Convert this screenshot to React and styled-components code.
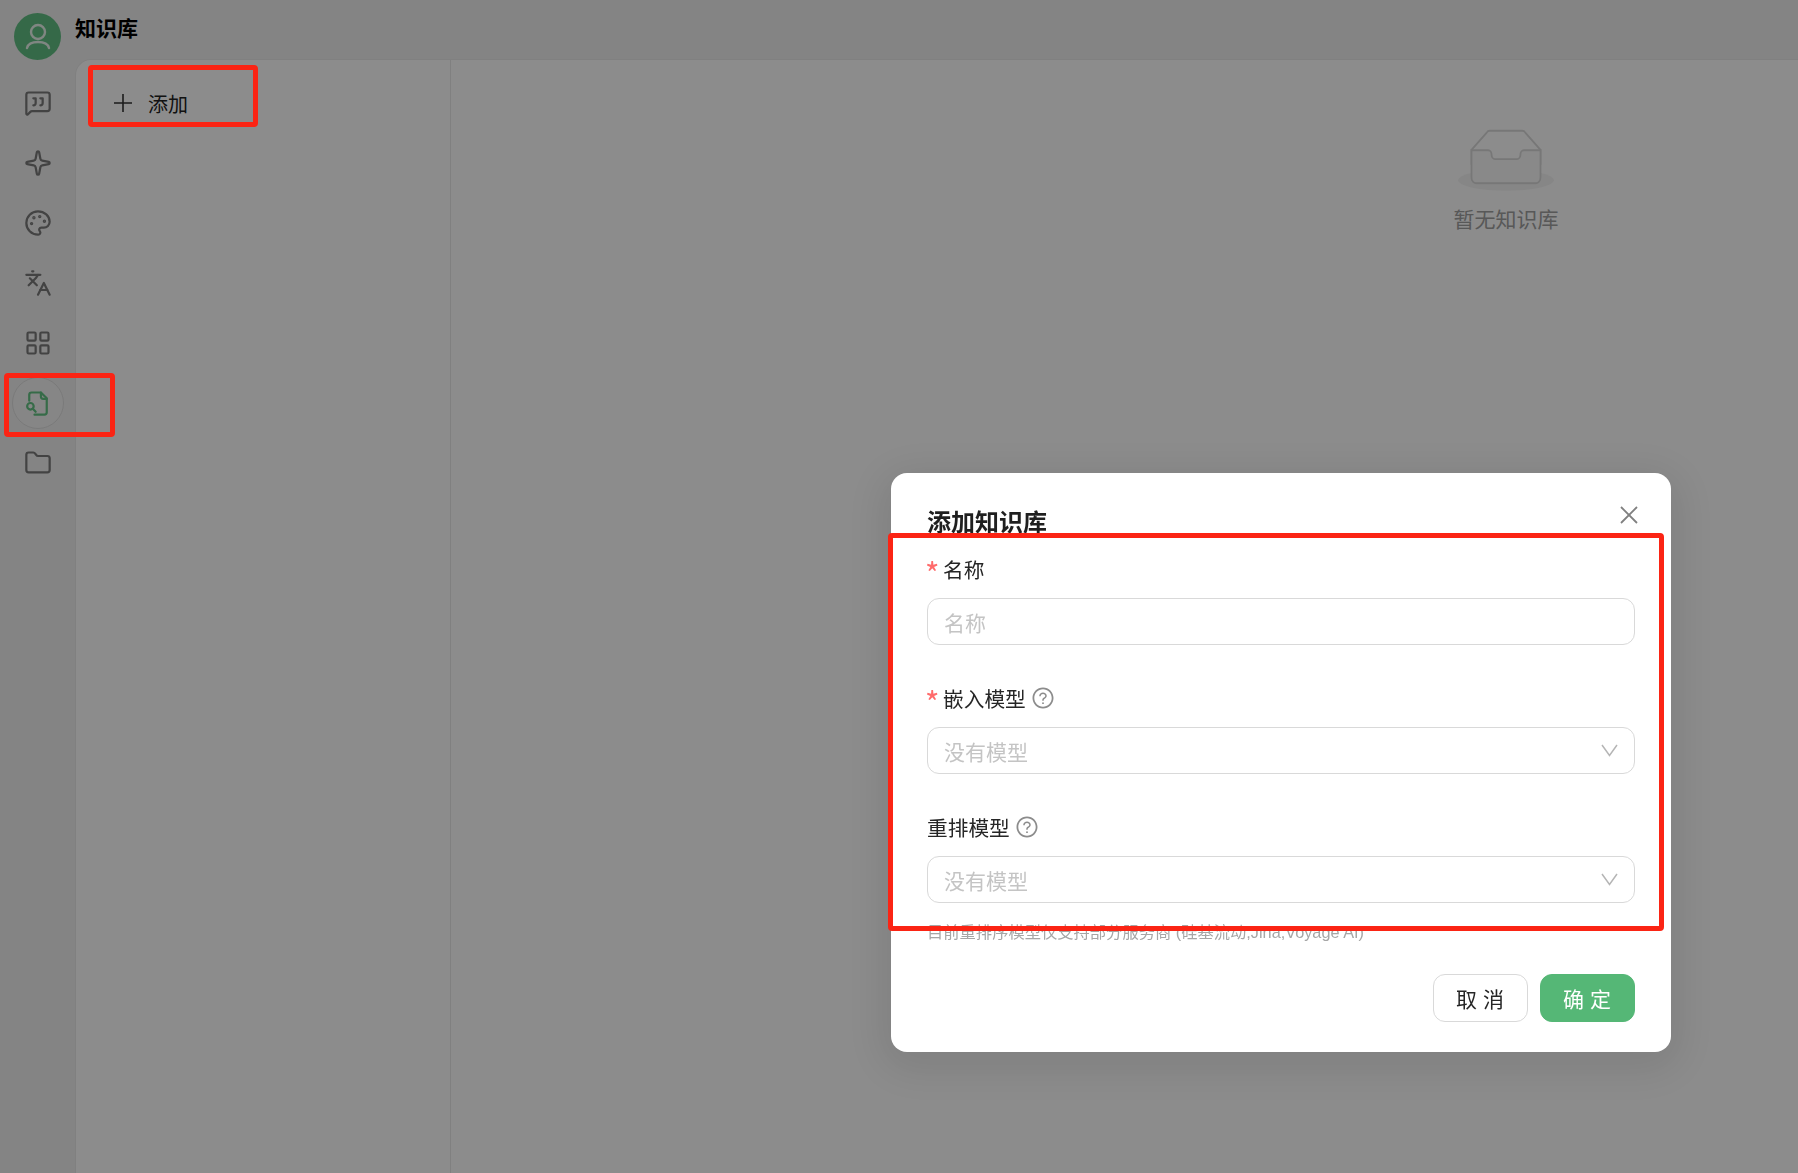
import React from 'react'
import styled, {createGlobalStyle} from 'styled-components'
import {MessageSquareQuote, Sparkle, Palette, Languages, LayoutGrid, Folder} from 'lucide-react'
import {AiOutlineQuestionCircle} from 'react-icons/ai'

const GlobalStyle = createGlobalStyle`
  html, body {
    margin: 0;
    padding: 0;
    height: 100%;
    overflow: hidden;
    font-family: "Liberation Sans", "Noto Sans CJK SC", sans-serif;
  }
  * { box-sizing: border-box; }
`

const Page = styled.div`
  display: flex;
  width: 1798px;
  height: 1173px;
  background: #f1f1f1;
  color: #000;
`

const Sidebar = styled.div`
  width: 75px;
  flex: none;
  display: flex;
  flex-direction: column;
  align-items: center;
  padding-top: 13px;
`

const Avatar = styled.div`
  width: 47px;
  height: 47px;
  border-radius: 50%;
  background: #62c084;
  display: flex;
  align-items: center;
  justify-content: center;
  margin-bottom: 17px;
`

const NavItem = styled.div`
  width: 52px;
  height: 52px;
  margin-bottom: 8px;
  border-radius: 50%;
  display: flex;
  align-items: center;
  justify-content: center;
  color: ${props => props.$active ? '#63c384' : '#7a7a7a'};
  background: ${props => props.$active ? '#f5f5f5' : 'transparent'};
  border: 1px solid ${props => props.$active ? '#dedede' : 'transparent'};
`

const Main = styled.div`
  flex: 1;
  display: flex;
  flex-direction: column;
`

const TopBar = styled.div`
  height: 59px;
  flex: none;
  padding-top: 16px;
  font-size: 21px;
  line-height: 26px;
  font-weight: 700;
`

const Panel = styled.div`
  flex: 1;
  display: flex;
  background: #fff;
  border-top: 1px solid #e9e9e9;
  border-left: 1px solid #e9e9e9;
  border-top-left-radius: 16px;
`

const ListColumn = styled.div`
  width: 375px;
  flex: none;
  border-right: 1px solid #e9e9e9;
  padding: 30px 0 0 37px;
`

const AddRow = styled.div`
  display: flex;
  align-items: center;
  gap: 15px;
  height: 26px;
  font-size: 20px;
  color: #222;
`

const Content = styled.div`
  flex: 1;
  display: flex;
  justify-content: flex-end;
  padding: 69px 192px 0 0;
`

const Empty = styled.div`
  width: 200px;
  display: flex;
  flex-direction: column;
  align-items: center;
  font-size: 21px;
  line-height: 32px;
  color: #a0a0a0;
`

const EmptyText = styled.div`
  margin-top: 13px;
`

const Overlay = styled.div`
  position: fixed;
  inset: 0;
  background: rgba(0, 0, 0, 0.45);
  padding: 473px 0 0 891px;
`

const Modal = styled.div`
  position: relative;
  width: 780px;
  height: 579px;
  background: #fff;
  border-radius: 16px;
  padding: 31px 36px 30px;
  box-shadow: 0 9px 42px 12px rgba(0, 0, 0, 0.09);
`

const Title = styled.div`
  height: 38px;
  margin-bottom: 12px;
  font-size: 24px;
  line-height: 38px;
  font-weight: 700;
  color: #1f1f1f;
`

const CloseButton = styled.div`
  position: absolute;
  top: 32px;
  right: 32px;
  display: flex;
  color: #808080;
`

const Field = styled.div`
  & + & { margin-top: 38px; }
`

const Label = styled.div`
  height: 30px;
  margin-bottom: 14px;
  display: flex;
  align-items: center;
  font-size: 20.7px;
  color: #262626;
  svg { margin-left: 5px; color: #8c8c8c; }
`

const Star = styled.span`
  width: 16px;
  flex: none;
  margin-left: -2px;
  margin-right: 2px;
  color: #ff6b6b;
  font-size: 31px;
  font-family: "Noto Sans CJK SC", sans-serif;
  line-height: 30px;
  padding-top: 8px;
`

const Input = styled.div`
  height: 47px;
  border: 1.5px solid #d9d9d9;
  border-radius: 12px;
  padding: 0 16px 0 16px;
  display: flex;
  align-items: center;
  justify-content: space-between;
  font-size: 21px;
  color: #c4c4c4;
`

const Help = styled.div`
  margin-top: 17px;
  height: 24px;
  font-size: 16.3px;
  line-height: 24px;
  color: #a6a6a6;
`

const Footer = styled.div`
  margin-top: 30px;
  display: flex;
  justify-content: flex-end;
  gap: 12px;
`

const Button = styled.div`
  width: 95px;
  height: 48px;
  border-radius: 12px;
  display: flex;
  align-items: center;
  justify-content: center;
  font-size: 21px;
  letter-spacing: 6px;
  padding-left: 5px;
  color: ${props => props.$primary ? '#fff' : '#262626'};
  background: ${props => props.$primary ? '#55b776' : '#fff'};
  border: 1.5px solid ${props => props.$primary ? '#55b776' : '#d9d9d9'};
`

const Mark = styled.div`
  position: fixed;
  left: ${props => props.$x}px;
  top: ${props => props.$y}px;
  width: ${props => props.$w}px;
  height: ${props => props.$h}px;
  border: 5px solid #fb2414;
  border-radius: 4px;
  pointer-events: none;
`

const UserGlyph = () => (
  <svg width="30" height="30" viewBox="0 0 30 30" fill="none" stroke="#e9f5ed" strokeWidth="2.4" strokeLinecap="round">
    <circle cx="15" cy="10" r="7" />
    <path d="M4 26c1-4 5-6 11-6s10 2 11 6" />
  </svg>
)

const DocSearchGlyph = ({size}) => (
  <svg width={size} height={size} viewBox="0 0 24 24" fill="none" stroke="currentColor" strokeWidth="1.9" strokeLinecap="round" strokeLinejoin="round">
    <path d="M4.5 10V5a2 2 0 0 1 2-2h8l5 5v12a2 2 0 0 1-2 2H9" />
    <path d="M14.5 3v3.5a2 2 0 0 0 2 2h3" />
    <circle cx="5.5" cy="14.8" r="2.8" />
    <path d="M7.6 17l2.4 2.5" />
  </svg>
)

const PlusGlyph = () => (
  <svg width="20" height="20" viewBox="0 0 20 20" stroke="#333" strokeWidth="1.6">
    <path d="M10 1v18M1 10h18" />
  </svg>
)

const CloseGlyph = () => (
  <svg width="20" height="20" viewBox="0 0 20 20" stroke="currentColor" strokeWidth="1.8">
    <path d="M2 2l16 16M18 2L2 18" />
  </svg>
)

const ChevronGlyph = () => (
  <svg width="17" height="13" viewBox="0 0 17 13" fill="none" stroke="#b5b5b5" strokeWidth="1.5">
    <path d="M1 1l7.5 10.5L16 1" />
  </svg>
)

const EmptyGlyph = () => (
  <svg width="96" height="62" viewBox="0 0 64 41">
    <g transform="translate(0 1)" fill="none" fillRule="evenodd">
      <ellipse cx="32" cy="33" rx="32" ry="7" fill="#f5f5f5" />
      <g fillRule="nonzero" stroke="#d9d9d9" strokeWidth="1.2">
        <path d="M55 12.76L44.854 1.258C44.367.474 43.656 0 42.907 0H21.093c-.749 0-1.46.474-1.947 1.257L9 12.761V22h46v-9.24z" />
        <path d="M41.613 15.931c0-1.605.994-2.93 2.227-2.931H55v18.137C55 33.26 53.68 35 52.05 35h-40.1C10.32 35 9 33.259 9 31.137V13h11.16c1.233 0 2.227 1.323 2.227 2.928v.022c0 1.605 1.005 2.901 2.237 2.901h14.752c1.232 0 2.237-1.308 2.237-2.913v-.007z" fill="#fafafa" />
      </g>
    </g>
  </svg>
)

const navIcons = [MessageSquareQuote, Sparkle, Palette, Languages, LayoutGrid, DocSearchGlyph, Folder]

const App = () => (
  <>
    <GlobalStyle />
    <Page>
      <Sidebar>
        <Avatar><UserGlyph /></Avatar>
        {navIcons.map((Icon, i) => (
          <NavItem key={i} $active={i === 5}>
            <Icon size={28} strokeWidth={1.9} />
          </NavItem>
        ))}
      </Sidebar>
      <Main>
        <TopBar>知识库</TopBar>
        <Panel>
          <ListColumn>
            <AddRow><PlusGlyph />添加</AddRow>
          </ListColumn>
          <Content>
            <Empty>
              <EmptyGlyph />
              <EmptyText>暂无知识库</EmptyText>
            </Empty>
          </Content>
        </Panel>
      </Main>
    </Page>
    <Overlay>
      <Modal>
        <Title>添加知识库</Title>
        <CloseButton><CloseGlyph /></CloseButton>
        <Field>
          <Label><Star>*</Star>名称</Label>
          <Input>名称</Input>
        </Field>
        <Field>
          <Label><Star>*</Star>嵌入模型<AiOutlineQuestionCircle size={24} /></Label>
          <Input>没有模型<ChevronGlyph /></Input>
        </Field>
        <Field>
          <Label>重排模型<AiOutlineQuestionCircle size={24} /></Label>
          <Input>没有模型<ChevronGlyph /></Input>
        </Field>
        <Help>目前重排序模型仅支持部分服务商 (硅基流动,Jina,Voyage AI)</Help>
        <Footer>
          <Button>取消</Button>
          <Button $primary>确定</Button>
        </Footer>
      </Modal>
    </Overlay>
    <Mark $x={88} $y={65} $w={170} $h={62} />
    <Mark $x={4} $y={373} $w={111} $h={64} />
    <Mark $x={888} $y={533} $w={776} $h={398} />
  </>
)

export default App
